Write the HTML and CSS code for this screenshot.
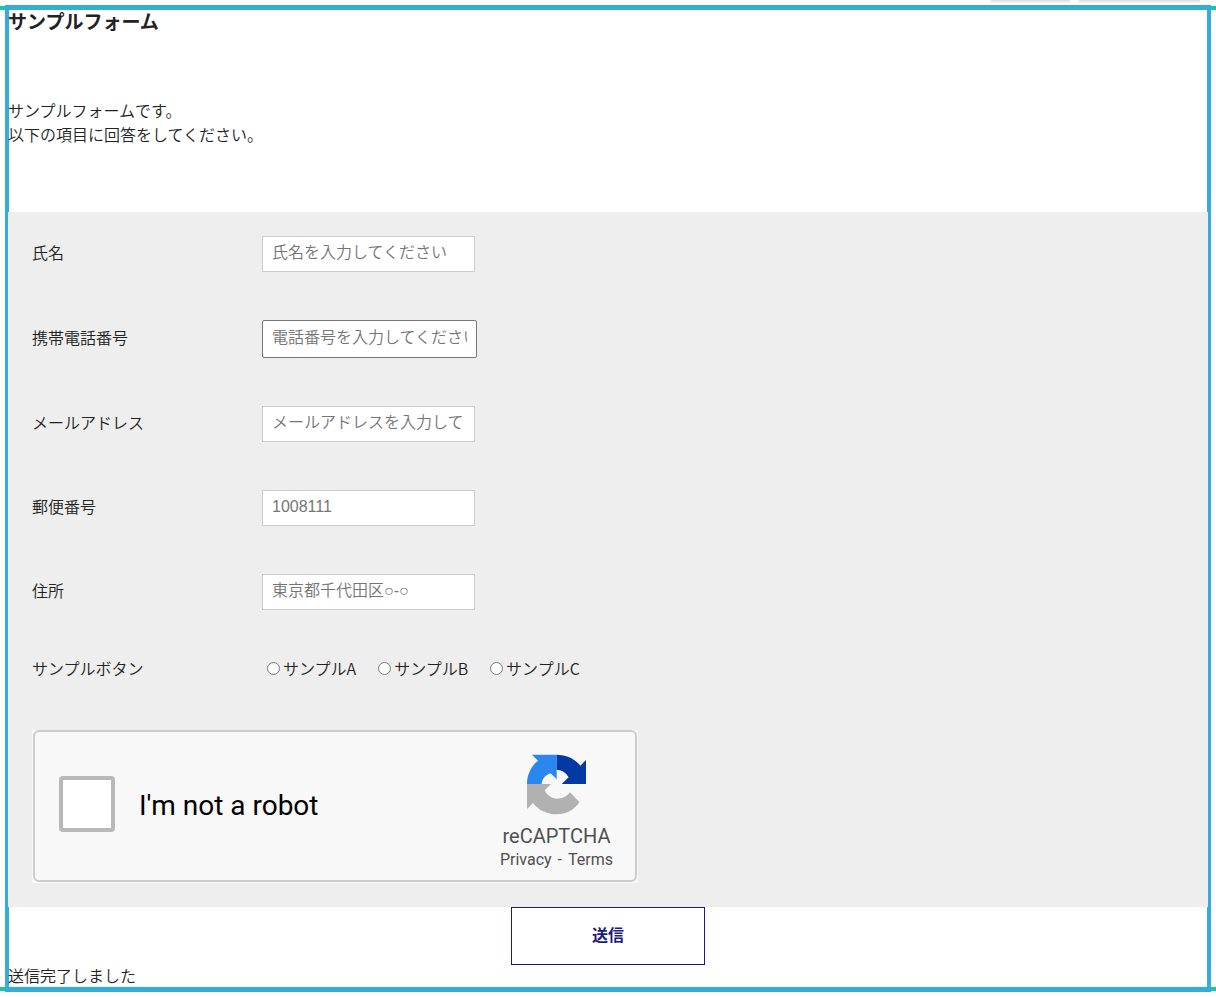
FILE: index.html
```html
<!DOCTYPE html>
<html lang="ja">
<head>
<meta charset="utf-8">
<title>サンプルフォーム</title>
<link rel="stylesheet" href="styles.css">
</head>
<body>
<div class="toolbar"><span class="tab tab-small"></span><span class="tab tab-large"></span></div>
<main class="stage">
  <div class="frame">
    <div class="content">
      <h1 class="title">サンプルフォーム</h1>
      <p class="intro">サンプルフォームです。<br>以下の項目に回答をしてください。</p>
      <form class="form" id="sample-form">
        <div class="row"><label class="label" for="name">氏名</label><input class="field" id="name" type="text" placeholder="氏名を入力してください"></div>
        <div class="row"><label class="label" for="phone">携帯電話番号</label><input class="field field-phone" id="phone" type="tel" placeholder="電話番号を入力してください"></div>
        <div class="row"><label class="label" for="mail">メールアドレス</label><input class="field" id="mail" type="email" placeholder="メールアドレスを入力してください"></div>
        <div class="row"><label class="label" for="zip">郵便番号</label><input class="field" id="zip" type="text" placeholder="1008111"></div>
        <div class="row"><label class="label" for="address">住所</label><input class="field" id="address" type="text" placeholder="東京都千代田区○-○"></div>
        <div class="row" role="radiogroup" aria-labelledby="choice-label">
          <span class="label" id="choice-label">サンプルボタン</span>
          <div class="choices">
            <label class="choice"><input class="radio" type="radio" name="choice">サンプルA</label>
            <label class="choice"><input class="radio" type="radio" name="choice">サンプルB</label>
            <label class="choice"><input class="radio" type="radio" name="choice">サンプルC</label>
          </div>
        </div>
        <div class="captcha">
          <div class="captcha-box">
            <label class="robot"><input class="robot-check" type="checkbox">I'm not a robot</label>
            <div class="brand">
              <svg class="brand-logo" viewBox="140 102 183 183" aria-hidden="true">
                <path fill="#2b87ef" d="M143 192C143 163 156 138 176 122L158 104H232V178L214 160C198 165 188 177 187 192Z"/>
                <path fill="#0339a2" d="M232 104C262 104 287 117 303 137L320 120V192H247L268 172C260 158 248 150 232 150Z"/>
                <path fill="#b1b1b1" d="M143 192H215L196 211C203 226 217 236 234 236C250 236 262 230 272 217L300 247C285 270 260 283 232 283C203 283 177 270 161 249L143 267Z"/>
              </svg>
              <span class="brand-name">reCAPTCHA</span>
              <span class="brand-links"><a class="brand-link" href="#privacy">Privacy</a><span>-</span><a class="brand-link" href="#terms">Terms</a></span>
            </div>
          </div>
        </div>
      </form>
      <button class="submit" type="submit" form="sample-form">送信</button>
      <p class="message">送信完了しました</p>
    </div>
  </div>
</main>
</body>
</html>
```
FILE: styles.css
```css
* { box-sizing: border-box; }

body {
  margin: 0;
  background: #fff;
  color: #222;
  font: 16px/24px "Noto Sans CJK JP", sans-serif;
  font-weight: 350;
}

.toolbar {
  display: flex;
  justify-content: flex-end;
  gap: 9px;
  height: 5px;
  padding-right: 16px;
  overflow: hidden;
}
.tab { height: 1px; background: #e0e0e0; box-shadow: 0 1px 2px #ccc; }
.tab-small { width: 79px; }
.tab-large { width: 121px; }

.stage { position: relative; padding: 0 5px 5px; }

/* green guide lines that run behind and across the frame */
.stage::before {
  content: "";
  position: absolute;
  inset: 1px 0 6px;
  border-top: 4px solid #14c8a0;
  border-bottom: 4px solid #14c8a0;
  pointer-events: none;
}
.frame { position: relative; border: 4px solid #35acd9; }
.content { margin: 0 -1px; }

.title { margin: 0; font-size: 19px; line-height: 24px; font-weight: 700; }
.intro { margin: 65px 0 66px; }

.form {
  display: flex;
  flex-direction: column;
  gap: 48px;
  padding: 24px;
  background: #eee;
}
.row { display: flex; align-items: center; }
.label { flex: none; width: 230px; padding-bottom: 4px; line-height: 20px; }

.field {
  width: 213px;
  height: 36px;
  padding: 0 9px 3px;
  border: 1px solid #ccc;
  border-radius: 0;
  background: #fff;
  color: #222;
  font: inherit;
  font-family: "Liberation Sans", "Noto Sans CJK JP", sans-serif;
}
.field::placeholder { color: #757575; opacity: 1; }
.field-phone {
  width: 215px;
  height: 38px;
  border-color: #767676;
  border-radius: 2px;
}

.choices { display: flex; gap: 22px; padding-left: 5px; }
.choice { display: flex; align-items: center; gap: 3px; height: 24px; padding-bottom: 4px; }
.radio { width: 13px; height: 13px; margin: 0; }

.captcha {
  width: 100%;
  max-width: 606px;
  padding: 0 1px 1px;
  background: #f9f9f9;
  font-family: Roboto, sans-serif;
  font-weight: 400;
}
.captcha-box {
  display: flex;
  align-items: center;
  justify-content: space-between;
  height: 152px;
  padding: 0 22px 0 24px;
  border: 2px solid #ccc;
  border-radius: 6px;
  background: #f8f8f8;
}
.robot {
  display: flex;
  align-items: flex-start;
  gap: 24px;
  color: #000;
  font-size: 28px;
  line-height: 60px;
}
.robot-check {
  appearance: none;
  width: 56px;
  height: 56px;
  margin: 0;
  border: 4px solid #b9b9b9;
  border-radius: 4px;
  background: #fff;
}
.brand {
  display: flex;
  flex-direction: column;
  align-items: center;
  padding-top: 14px;
  color: #505050;
}
.brand-logo { width: 61px; height: 61px; margin-bottom: 9px; }
.brand-name { font-size: 20px; line-height: 24px; }
.brand-links { display: flex; gap: 6px; font-size: 16px; line-height: 24px; }
.brand-link { color: inherit; text-decoration: none; }

.submit {
  display: block;
  width: 194px;
  height: 58px;
  margin: 0 auto;
  padding: 0 0 4px;
  border: 1px solid #1a1a80;
  background: #fff;
  color: #1a1a80;
  font: inherit;
  font-weight: 700;
}
.message { margin: 0; padding-bottom: 2px; line-height: 21px; }
```
